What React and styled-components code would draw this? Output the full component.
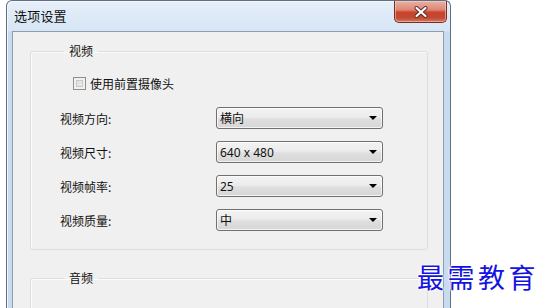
import React from 'react';
import styled, { createGlobalStyle } from 'styled-components';

const Global = createGlobalStyle`
  html, body {
    margin: 0;
    padding: 0;
    background: #ffffff;
    overflow: hidden;
  }
  body {
    font-family: "Noto Sans", "Noto Sans CJK SC", sans-serif;
    font-size: 12px;
    color: #000;
  }
`;

const Stage = styled.div`
  position: relative;
  width: 541px;
  height: 308px;
  overflow: hidden;
`;

const Window = styled.div`
  margin-left: 6px;
  width: 443px;
  height: 320px;
  border: 1px solid #5f6f82;
  border-bottom: none;
  border-radius: 6px 6px 0 0;
  background: linear-gradient(to bottom, #e6eff9 0px, #d6e5f5 30px, #c9dbef 31px, #c9dbef 100%);
  box-shadow: inset 1px 1px 0 #f4f8fd;
  display: flex;
  flex-direction: column;
`;

const TitleBar = styled.div`
  height: 30px;
  display: flex;
  align-items: flex-start;
  padding-left: 7px;
`;

const Title = styled.span`
  font-family: "Noto Sans CJK SC", sans-serif;
  font-size: 13px;
  line-height: 30px;
  color: #111;
  letter-spacing: 0.2px;
`;

const CloseButton = styled.div`
  margin-left: auto;
  margin-right: 3px;
  width: 51px;
  height: 21px;
  border: 1px solid #7a2c22;
  border-top: none;
  border-radius: 0 0 5px 5px;
  background: linear-gradient(to bottom, #eab1a6 0%, #dc8a78 40%, #c9432c 55%, #c24a33 80%, #d37a62 100%);
  box-shadow: inset 0 0 0 1px rgba(255, 220, 210, 0.5);
  display: flex;
  align-items: center;
  justify-content: center;
`;

const Frame = styled.div`
  flex: 1;
  display: flex;
  padding: 0 6px 0 5px;
`;

const Panel = styled.div`
  flex: 1;
  border: 1px solid #8d9cae;
  border-bottom: none;
  background: #f0f0f0;
  padding: 12px 15px 0 17px;
`;

const Group = styled.fieldset`
  margin: 0;
  padding: 0 0 ${(p) => (p.$open ? '0' : '18px')} 29px;
  min-width: 0;
  border: 1px solid #d9dfe4;
  border-radius: 3px;
  box-shadow: inset 1px 1px 0 #fbfbfb;
  height: ${(p) => (p.$open ? '60px' : 'auto')};
  & + & {
    margin-top: 21px;
  }
`;

const Legend = styled.legend`
  margin-left: 4px;
  padding: 0 5px;
  font-family: "Noto Sans CJK SC", sans-serif;
  font-size: 12px;
  line-height: 14px;
  color: #111;
`;

const Form = styled.div`
  display: grid;
  grid-template-columns: 156px 167px;
  grid-auto-rows: 22px;
  row-gap: 12px;
  padding-top: 15px;
`;

const CheckRow = styled.label`
  grid-column: 1 / -1;
  display: flex;
  align-items: center;
  gap: 4px;
  padding-left: 13px;
  margin-bottom: 2px;
  font-family: "Noto Sans CJK SC", sans-serif;
  font-size: 12px;
  color: #111;
`;

const Box = styled.span`
  width: 11px;
  height: 11px;
  border: 1px solid #8e8f8f;
  background: linear-gradient(135deg, #d6d6d6, #f4f4f4);
  box-shadow: inset 0 0 0 2px #f0f0f0, inset 0 0 0 3px #c9c9c9;
`;

const Label = styled.span`
  display: flex;
  align-items: center;
  font-family: "Noto Sans CJK SC", sans-serif;
  font-size: 12px;
  color: #111;
`;

const Select = styled.div`
  box-sizing: border-box;
  height: 22px;
  border: 1px solid #707070;
  border-radius: 3px;
  background: linear-gradient(to bottom, #f3f3f3 0%, #ececec 45%, #dfdfdf 55%, #d6d6d6 100%);
  box-shadow: inset 0 0 0 1px rgba(255, 255, 255, 0.7);
  display: flex;
  align-items: center;
  padding: 0 0 0 3px;
  font-family: "Noto Sans", "Noto Sans CJK SC", sans-serif;
  font-size: 12px;
  color: #111;
`;

const Arrow = styled.span`
  margin-left: auto;
  margin-right: 5px;
  width: 0;
  height: 0;
  border-left: 4px solid transparent;
  border-right: 4px solid transparent;
  border-top: 4px solid #000;
`;

const Watermark = styled.div`
  position: absolute;
  left: 417px;
  top: 257px;
  font-family: "Noto Sans CJK SC", sans-serif;
  font-weight: 400;
  font-size: 27px;
  letter-spacing: 3.5px;
  color: #1414e0;
  text-shadow: 0 0 2px #fff, 0 0 2px #fff, 0 0 3px #fff, 0 0 3px #fff;
`;

const rows = [
  { label: '视频方向:', value: '横向' },
  { label: '视频尺寸:', value: '640 x 480' },
  { label: '视频帧率:', value: '25' },
  { label: '视频质量:', value: '中' },
];

export default function App() {
  return (
    <Stage>
      <Global />
      <Window>
        <TitleBar>
          <Title>选项设置</Title>
          <CloseButton>
            <svg width="14" height="12" viewBox="0 0 14 12">
              <path d="M2.5 2 L11.5 10 M11.5 2 L2.5 10" stroke="#5a2a22" strokeWidth="4" strokeLinecap="round" />
              <path d="M2.5 2 L11.5 10 M11.5 2 L2.5 10" stroke="#ffffff" strokeWidth="2.2" strokeLinecap="round" />
            </svg>
          </CloseButton>
        </TitleBar>
        <Frame>
          <Panel>
            <Group>
              <Legend>视频</Legend>
              <Form>
                <CheckRow>
                  <Box />
                  使用前置摄像头
                </CheckRow>
                {rows.map((r) => (
                  <React.Fragment key={r.label}>
                    <Label>{r.label}</Label>
                    <Select>
                      {r.value}
                      <Arrow />
                    </Select>
                  </React.Fragment>
                ))}
              </Form>
            </Group>
            <Group $open>
              <Legend>音频</Legend>
            </Group>
          </Panel>
        </Frame>
      </Window>
      <Watermark>最需教育</Watermark>
    </Stage>
  );
}
